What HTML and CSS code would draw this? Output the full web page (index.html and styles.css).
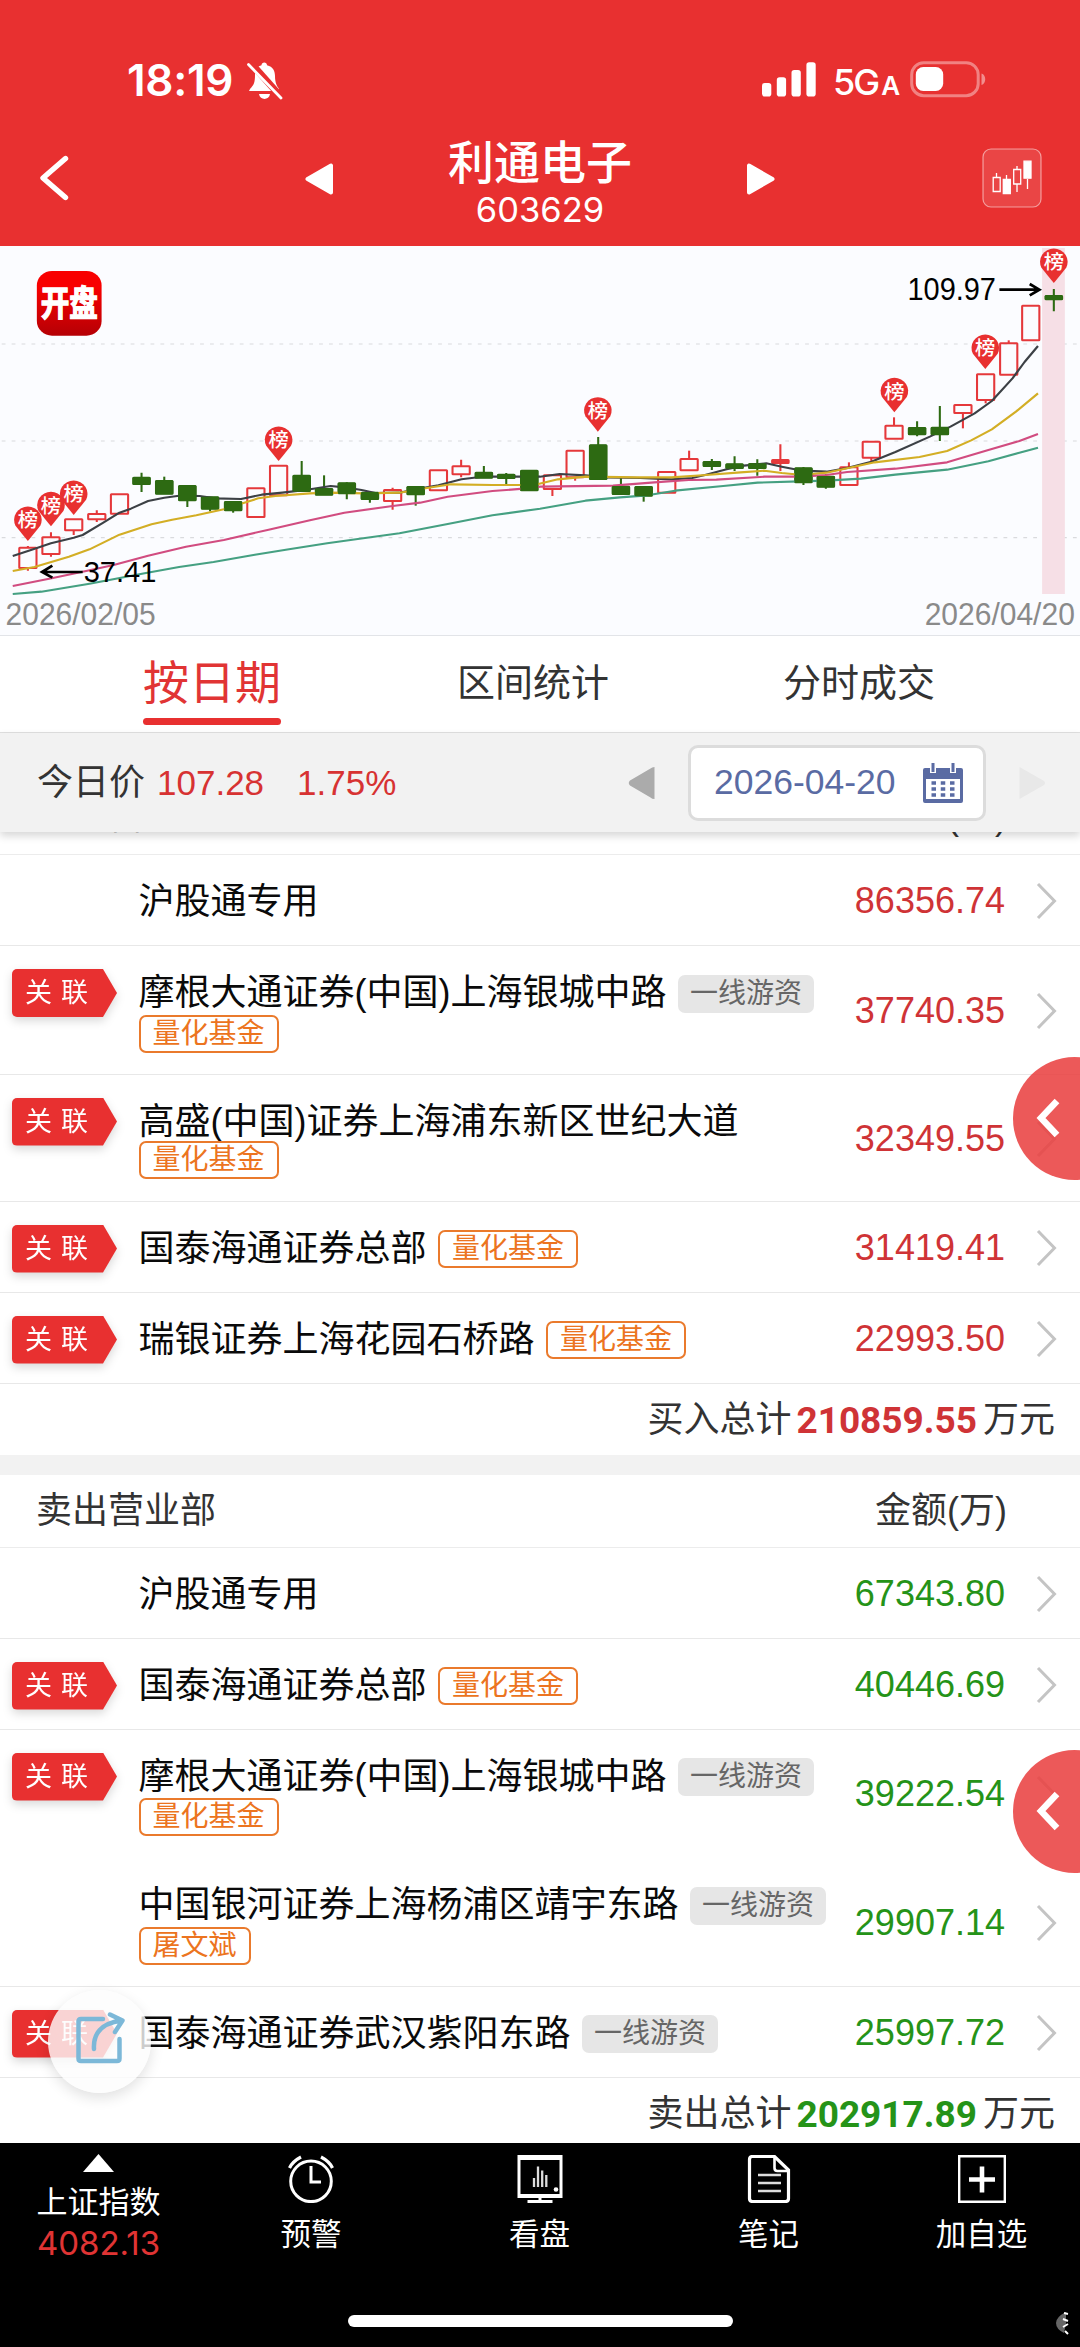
FILE: index.html
```html
<!DOCTYPE html>
<html lang="zh-CN">
<head>
<meta charset="utf-8">
<title>利通电子 603629</title>
<link rel="stylesheet" href="styles.css">
</head>
<body>
<svg class="defs" width="0" height="0">
  <symbol id="chev" viewBox="0 0 21 38"><path d="M2 2L18.500 19L2 36" fill="none" stroke="#c4c4c4" stroke-width="3"/></symbol>
</svg>
<div class="app">
  <header class="top">
    <div class="status">
      <span class="clock">18:19</span>
      <svg class="bell" width="38" height="40" viewBox="0 0 38 40"><path fill="#fff" d="M4 28c4-4 5-7 5-14C9 8 12 5 15.500 4.200 15.500 0.500 21 0.500 21 4.200 27 5.500 29 10 29 15c0 7 2 10 4 13v2H3z"/><path fill="#fff" d="M13 33h11c-1 6.500-10 6.500-11 0z"/><path d="M4 1L36 37" stroke="#e83030" stroke-width="7"/><path d="M2.500 3.500L35 37" stroke="#fff" stroke-width="2.800" stroke-linecap="round"/></svg>
      <svg class="signal" width="54" height="35" viewBox="0 0 54 35" fill="#fff"><rect y="21" width="9.300" height="13.500" rx="2.800"/><rect x="14.800" y="15.200" width="9.300" height="19.300" rx="2.800"/><rect x="29.500" y="8" width="9.300" height="26.500" rx="2.800"/><rect x="44.400" y="0.300" width="9.300" height="34.200" rx="2.800"/></svg>
      <span class="net">5G<small>A</small></span>
      <svg class="battery" width="77" height="37" viewBox="0 0 77 37"><rect x="1.700" y="1.700" width="66.500" height="33" rx="12" fill="none" stroke="#fff" stroke-opacity=".4" stroke-width="3"/><rect x="5.800" y="6" width="27.400" height="24" rx="7.500" fill="#fff"/><path d="M71.500 12.500c5 1.500 5 10 0 11.500z" fill="#fff" fill-opacity=".45"/></svg>
    </div>
    <div class="nav">
      <svg class="back" width="34" height="48" viewBox="0 0 34 48"><path d="M28.500 4.500L6 24l22.500 19.500" fill="none" stroke="#fff" stroke-width="5.400" stroke-linecap="round" stroke-linejoin="round"/></svg>
      <svg class="prev" width="28" height="32" viewBox="0 0 28 32"><path d="M26 2.500v27L2.500 16z" fill="#fff" stroke="#fff" stroke-width="4" stroke-linejoin="round"/></svg>
      <div class="title"><h1>利通电子</h1><p>603629</p></div>
      <svg class="next" width="28" height="32" viewBox="0 0 28 32"><path d="M2 2.500v27L25.500 16z" fill="#fff" stroke="#fff" stroke-width="4" stroke-linejoin="round"/></svg>
      <svg class="kbtn" width="60" height="60" viewBox="0 0 60 60"><rect x="1" y="1" width="58" height="58" rx="8" fill="#fff" fill-opacity=".1" stroke="#fff" stroke-opacity=".5" stroke-width="1.200"/><g stroke="#fff" stroke-width="1.300"><path d="M14.500 25v4M24.500 27v4M35 18v4M35 36v8M45.500 31v10" /><path d="M11.200 29.500h7v14h-7zM31.700 21.500h7v14.500h-7z" fill="none"/><path d="M21.300 31.500h7v14h-7zM42 13.200h7v17h-7z" fill="#fff"/></g></svg>
    </div>
  </header>

  <section class="chart"><svg id="kline" width="1080" height="389" viewBox="0 18 3136 1167" preserveAspectRatio="none"></svg></section>

  <nav class="tabs"><a class="tab on">按日期</a><a class="tab">区间统计</a><a class="tab">分时成交</a></nav>

  <div class="pricebar">
    <span class="today">今日价</span><span class="px">107.28</span><span class="px pct">1.75%</span>
    <svg class="dprev" width="27" height="34" viewBox="0 0 27 34"><path d="M26.500 1v32Q24 33 22.500 31.500L2 19.500Q-.5 17 2 14.500L22.500 2.500Q24 1 26.500 1z" fill="#ababab"/></svg>
    <div class="date"><span>2026-04-20</span>
      <svg width="42" height="40" viewBox="0 0 42 40"><path fill="#5a6ba3" d="M3 5h5v5h6V5h14v5h6V5h5q2 0 2 2v31q0 2-2 2H3q-2 0-2-2V7q0-2 2-2z"/><path fill="#5a6ba3" d="M9.500 0h3v9h-3zM29.500 0h3v9h-3z"/><path fill="#fff" d="M4 16h34v20H4z"/><path stroke="#5a6ba3" stroke-width="3.600" stroke-dasharray="4.500 4.750" d="M9.500 20h24M9.500 26h24M9.500 32h24"/></svg>
    </div>
    <svg class="dnext" width="27" height="34" viewBox="0 0 27 34"><path d="M.5 1v32L25 19q2-2 0-4z" fill="#e8e8e8"/></svg>
  </div>

  <main class="list">
    <div class="thead first"><span>买入营业部</span><span>金额(万)</span></div>
    <div class="row"><i></i><div class="name"><p>沪股通专用</p></div><b class="amt">86356.74</b><svg class="chev"><use href="#chev"/></svg></div>
    <div class="row tall"><em class="link"><span>关联</span></em><div class="name"><p>摩根大通证券(中国)上海银城中路<span class="tag gray">一线游资</span></p><p><span class="tag">量化基金</span></p></div><b class="amt">37740.35</b><svg class="chev"><use href="#chev"/></svg></div>
    <div class="row tall tight"><em class="link"><span>关联</span></em><div class="name"><p>高盛(中国)证券上海浦东新区世纪大道</p><p><span class="tag">量化基金</span></p></div><b class="amt">32349.55</b><svg class="chev"><use href="#chev"/></svg></div>
    <div class="row"><em class="link"><span>关联</span></em><div class="name"><p>国泰海通证券总部<span class="tag">量化基金</span></p></div><b class="amt">31419.41</b><svg class="chev"><use href="#chev"/></svg></div>
    <div class="row"><em class="link"><span>关联</span></em><div class="name"><p>瑞银证券上海花园石桥路<span class="tag">量化基金</span></p></div><b class="amt">22993.50</b><svg class="chev"><use href="#chev"/></svg></div>
    <div class="total">买入总计<strong>210859.55</strong>万元</div>
    <div class="gap"></div>
    <div class="sell">
      <div class="thead"><span>卖出营业部</span><span>金额(万)</span></div>
      <div class="row"><i></i><div class="name"><p>沪股通专用</p></div><b class="amt">67343.80</b><svg class="chev"><use href="#chev"/></svg></div>
      <div class="row"><em class="link"><span>关联</span></em><div class="name"><p>国泰海通证券总部<span class="tag">量化基金</span></p></div><b class="amt">40446.69</b><svg class="chev"><use href="#chev"/></svg></div>
      <div class="row tall plain"><em class="link"><span>关联</span></em><div class="name"><p>摩根大通证券(中国)上海银城中路<span class="tag gray">一线游资</span></p><p><span class="tag">量化基金</span></p></div><b class="amt">39222.54</b><svg class="chev"><use href="#chev"/></svg></div>
      <div class="row tall"><i></i><div class="name"><p>中国银河证券上海杨浦区靖宇东路<span class="tag gray">一线游资</span></p><p><span class="tag">屠文斌</span></p></div><b class="amt">29907.14</b><svg class="chev"><use href="#chev"/></svg></div>
      <div class="row"><em class="link"><span>关联</span></em><div class="name"><p>国泰海通证券武汉紫阳东路<span class="tag gray">一线游资</span></p></div><b class="amt">25997.72</b><svg class="chev"><use href="#chev"/></svg></div>
      <div class="total">卖出总计<strong>202917.89</strong>万元</div>
    </div>
  </main>

  <footer class="dock">
    <div class="items">
      <div class="item index"><svg width="31" height="18" viewBox="0 0 31 18"><path d="M15.500 0L31 18H0z" fill="#fff"/></svg><span>上证指数</span><b>4082.13</b></div>
      <div class="item"><svg width="48" height="48" viewBox="0 0 48 48" fill="none" stroke="#fff"><circle cx="24" cy="26.300" r="20.300" stroke-width="3"/><path d="M24 11v16h10" stroke-width="3"/><path d="M2.500 13q3-6.500 11.500-11M45.500 13q-3-6.500-11.500-11" stroke-width="3.200"/></svg><span>预警</span></div>
      <div class="item"><svg width="48" height="48" viewBox="0 0 48 48"><path fill="#fff" fill-rule="evenodd" d="M1.500 0h45v43h-45zM4.500 5v34h39V5z"/><path d="M24 42v4M11.500 46.500h25" stroke="#fff" stroke-width="3"/><path d="M18 32v-9M22 32V11.500M26.200 32V15.500M30.300 32V20" stroke="#ddd" stroke-width="2.300"/><circle cx="40" cy="34.500" r="2.300" fill="#fff"/></svg><span>看盘</span></div>
      <div class="item"><svg width="48" height="48" viewBox="0 0 48 48" fill="none" stroke="#fff"><path d="M7.500 1.500h22L43.500 15v28.500q0 3-3 3h-33q-3 0-3-3v-39q0-3 3-3z" stroke-width="3.200"/><path d="M29.500 2v11q0 3 3 3h11" stroke-width="2.600"/><path d="M13 20h23M13 28h23M13 36h23" stroke="#ddd" stroke-width="2.500"/></svg><span>笔记</span></div>
      <div class="item"><svg width="48" height="48" viewBox="0 0 48 48" fill="none" stroke="#fff"><path d="M1.200 1.200h45.600v45.600H1.200z" stroke-width="2.400"/><path d="M24 11.500v26M11 24.500h26" stroke-width="4.600"/></svg><span>加自选</span></div>
    </div>
    <div class="home"></div>
    <svg class="mark" width="16" height="24" viewBox="0 0 16 24"><path d="M12 1Q2 6 2 12t8 10l2-10z" fill="#666"/><path d="M10 2l4 1M9 8l5 2M9 16l5-3M11 20l3 3" stroke="#fff" stroke-width="2"/></svg>
  </footer>

  <div class="drawer d1"><svg width="26" height="40" viewBox="0 0 26 40"><path d="M21 3L5 20l16 17" fill="none" stroke="#fff" stroke-width="6.500"/></svg></div>
  <div class="drawer d2"><svg width="26" height="40" viewBox="0 0 26 40"><path d="M21 3L5 20l16 17" fill="none" stroke="#fff" stroke-width="6.500"/></svg></div>
  <div class="share"><svg width="50" height="52" viewBox="0 0 50 52" fill="none" stroke="#7cb8d8" stroke-width="4.500" stroke-linecap="round" stroke-linejoin="round"><path d="M28 7H6q-2.500 0-2.500 2.500v37Q3.500 49 6 49h36q2.500 0 2.500-2.500V27"/><path d="M19 37C18 22 26 11 47 8.500M35 2.500L47.500 8.500 40 20"/></svg></div>
</div>
<script src="script.js"></script>
</body>
</html>
```
FILE: styles.css
```css
* { box-sizing: border-box; }
body, h1, p { margin: 0; }
body { background: #fff; font-family: "Liberation Sans", "Noto Sans CJK SC", sans-serif; }
.defs { position: absolute; }
.app { position: relative; width: 1080px; height: 2347px; overflow: hidden; display: flex; flex-direction: column; }

.top { height: 246px; background: #e83030; color: #fff; flex: none; }
.status { display: flex; height: 118px; padding: 61px 0 0 127px; align-items: flex-start; font-family: Inter, sans-serif; font-weight: 600; }
.clock { width: 119px; font-size: 44px; line-height: 38px; letter-spacing: -.3px; }
.bell { margin-right: 478px; }
.signal { margin-top: 1px; }
.net { width: 94px; padding-left: 17px; font-size: 36px; line-height: 42px; font-weight: 500; letter-spacing: -2px; white-space: nowrap; }
.net small { font-size: 26px; font-weight: 600; margin-left: 3px; }
.nav { display: flex; align-items: flex-start; height: 128px; padding-left: 37px; }
.back { margin: 36px 234px 0 0; }
.prev { margin-top: 45px; }
.title { width: 414px; text-align: center; }
.title h1 { margin-top: 19px; font-size: 46px; line-height: 52px; font-weight: 500; }
.title p { font: 400 34.500px/40px Inter, sans-serif; margin-top: 1px; }
.next { margin: 45px 207px 0 0; }
.kbtn { margin-top: 30px; }

.chart { height: 390px; background: #fbfcff; border-bottom: 1px solid #e2e4e8; flex: none; }
.chart svg { display: block; }

.tabs { display: flex; height: 97px; border-bottom: 1px solid #e0e0e0; flex: none; padding-left: 143px; }
.tab { flex: none; white-space: nowrap; font-size: 38px; line-height: 95px; color: #333; }
.tab + .tab { margin-left: 174px; }
.tab.on { font-size: 46px; color: #e13434; }
.tab.on + .tab { margin-left: 176px; }
.tab.on::after { content: ""; display: block; height: 7px; margin-top: -13px; border-radius: 4px; background: #e83030; }

.pricebar { position: relative; z-index: 1; display: flex; align-items: center; height: 99px; flex: none; padding-left: 37px; background: #f2f2f2; box-shadow: 0 4px 8px rgba(0,0,0,.16); font-size: 35px; }
.today { font-size: 36px; line-height: 40px; color: #333; }
.px { width: 140px; margin-left: 12px; color: #d73232; }
.pct { margin-left: 0; width: 190px; }
.dprev { margin: 0 33px 0 auto; }
.date { display: flex; align-items: center; width: 298px; height: 76px; padding: 0 19px 0 23px; justify-content: space-between; border: 3px solid #dcdcdc; border-radius: 10px; background: #fff; color: #5a6ba3; font-size: 35.500px; }
.dnext { margin: 0 34px 0 33px; }

.list { height: 1311px; overflow: hidden; flex: none; }
.thead { display: flex; justify-content: space-between; align-items: center; height: 72.5px; padding: 0 73px 8px 36px; font-size: 36px; color: #333; border-bottom: 1.500px solid #ececec; }
.thead.first { margin-top: -49.500px; padding-bottom: 10px; }
.row { display: grid; grid-template-columns: 126.500px 1fr auto 21px; height: 91px; padding: 0 23px 0 12px; border-bottom: 1.500px solid #e8e8e8; }
.row.tall { height: 128.500px; }
.row.tight { height: 127px; }
.row.plain { border-color: transparent; }
.name { padding-top: 27px; font-size: 36px; line-height: 40px; color: #0a0a0a; white-space: nowrap; }
.name p { display: flex; align-items: center; height: 40px; gap: 11.500px; }
.tight .name p + p { margin-top: -2px; }
.tag { flex: none; height: 38px; padding: 0 12px; border: 2.500px solid #ea7a2c; border-radius: 7px; font-size: 28px; line-height: 33px; color: #ec7420; }
.name p > .tag { margin-top: 1px; }
.tag.gray { border: 0; background: #e6e6e6; color: #666; line-height: 38px; }
.amt { align-self: center; margin-right: 31px; padding-top: 2px; font-size: 36px; font-weight: 400; color: #cf3336; }
.sell .amt, .sell .total strong { color: #259318; }
.chev { align-self: center; width: 21px; height: 38px; margin-top: 2px; }
.link { width: 105px; height: 48px; margin-top: 23px; font-style: normal; filter: drop-shadow(0 4px 5px rgba(0,0,0,.15)); }
.link span { display: block; height: 48px; padding-left: 13px; border-radius: 5px 0 0 5px; background: #e83030; color: #fff; font-size: 27px; line-height: 48px; letter-spacing: 9px; clip-path: polygon(0 0, 91px 0, 105px 50%, 91px 100%, 0 100%); }
.total { display: flex; justify-content: flex-end; height: 71.500px; padding-right: 25px; font-size: 36px; line-height: 72px; color: #333; }
.total strong { margin: 0 6px 0 5px; font: 700 37px/74px Roboto, sans-serif; color: #cf3336; }
.gap { height: 20px; background: #f2f2f2; }

.dock { position: relative; height: 204px; flex: none; background: #000; color: #fff; }
.items { display: grid; grid-template-columns: 197px 228px 229px 229px 197px; height: 172px; }
.item { display: flex; flex-direction: column; align-items: center; padding-top: 12px; font-size: 30.500px; }
.item span { line-height: 40px; margin-top: 11px; }
.index { padding-top: 11px; font-size: 31px; }
.index b { font: 400 33px/40px Inter, sans-serif; color: #e03434; }
.home { width: 385px; height: 12px; margin: 0 auto; border-radius: 6px; background: #fff; }
.mark { position: absolute; left: 1054px; top: 168px; }

.drawer { position: absolute; z-index: 2; left: 1013px; width: 123px; height: 123px; border-radius: 50%; background: rgba(233,64,64,.87); padding: 41px 0 0 23px; }
.d1 { top: 1057px; }
.d2 { top: 1750px; }
.share { position: absolute; z-index: 2; left: 48px; top: 1990px; width: 103px; height: 103px; border-radius: 50%; background: rgba(252,252,252,.8); box-shadow: 0 5px 14px rgba(0,0,0,.12); padding: 22px 0 0 27px; }
```
FILE: script.js
```js
// x, body top, body bottom, high, low, kind (r hollow, f filled red, g green)
const candles = [
[81,923,984,918,992,'r'],[148,892,942,877,950,'r'],[214,838,871,838,885,'r'],[281,822,838,811,846,'r'],[347,763,821,763,821,'r'],
[411,713,732,698,756,'g'],[477,723,761,710,761,'g'],[544,738,781,738,801,'g'],[610,772,806,772,814,'g'],[677,786,811,786,818,'g'],
[743,745,831,745,831,'r'],[809,677,766,677,766,'r'],[876,707,753,663,753,'g'],[941,747,764,706,764,'g'],[1007,730,760,727,778,'g'],
[1074,758,777,755,788,'g'],[1140,750,783,743,809,'r'],[1207,741,763,741,797,'g'],[1273,691,751,691,751,'r'],[1339,679,703,659,712,'r'],
[1405,698,713,678,713,'g'],[1470,704,714,699,733,'g'],[1537,692,751,692,751,'g'],[1604,706,747,706,768,'r'],[1670,632,712,632,722,'r'],
[1737,616,717,591,717,'g'],[1803,740,762,709,762,'g'],[1869,741,767,741,785,'g'],[1936,696,758,696,758,'r'],[2001,657,691,632,691,'r'],
[2067,666,678,657,690,'g'],[2133,673,684,649,693,'g'],[2199,672,684,658,707,'g'],[2266,660,669,613,693,'f'],[2333,685,727,681,735,'g'],
[2398,710,740,703,746,'g'],[2465,682,735,667,735,'r'],[2530,605,653,605,663,'r'],[2596,557,596,532,596,'r'],[2663,564,583,544,589,'g'],
[2729,563,583,498,603,'g'],[2796,495,519,495,565,'r'],[2862,403,480,403,490,'r'],[2929,310,404,301,404,'r'],[2993,197,301,197,301,'r'],
[3060,168,178,147,214,'g']];
const averages = {
'#3c4045':'37,948 90,930 148,910 214,893 240,885 300,848 347,818 380,806 430,783 477,773 520,767 580,768 625,775 700,777 760,764 820,758 870,752 910,746 960,738 1000,742 1050,750 1090,759 1160,758 1210,747 1273,736 1340,718 1400,710 1470,710 1568,710 1625,702 1700,706 1760,712 1860,714 1950,718 2010,714 2050,704 2110,688 2160,677 2225,670 2270,680 2330,692 2400,695 2460,684 2530,665 2600,636 2700,590 2760,560 2830,520 2880,483 2940,415 2975,366 3014,318',
'#d3ae25':'37,993 100,981 200,950 260,928 347,884 440,853 500,839 570,826 650,808 700,791 750,775 800,768 900,760 960,758 1060,760 1160,758 1240,744 1310,733 1430,735 1510,735 1560,733 1620,718 1700,710 1850,712 1950,712 2050,705 2150,697 2220,692 2270,699 2330,705 2400,698 2460,685 2540,667 2670,651 2750,633 2820,601 2880,568 2950,515 3014,460',
'#d14c80':'37,1038 150,1015 250,993 330,975 430,947 540,920 650,900 780,869 900,841 1000,818 1140,798 1220,788 1300,770 1430,753 1520,746 1570,740 1780,737 1900,727 2000,720 2080,719 2220,710 2330,710 2400,705 2460,696 2600,686 2750,667 2870,630 2960,603 3014,582',
'#45a082':'37,1062 120,1055 260,1031 420,1000 520,981 620,966 740,944 830,929 950,910 1060,894 1160,880 1300,852 1430,826 1568,806 1700,782 1800,772 1880,766 1960,752 2100,738 2200,728 2320,724 2400,722 2500,716 2600,704 2750,689 2870,664 2960,638 3014,623'};
const pins = [[81,840],[148,796],[214,762],[809,600],[1736,512],[2597,454],[2861,324],[3060,66]];

let s = '';
for (const y of [312, 603, 893]) s += `<path d="M5 ${y}H3136" stroke="#d9dadd" stroke-width="3.500" stroke-dasharray="11 17.800"/>`;
s += '<rect x="3026" y="24" width="66" height="1038" fill="#f6dfe6"/>';
for (const [x, t, b, h, l, k] of candles) {
  const c = k === 'g' ? '#2d6a12' : '#e5383b';
  const fill = k === 'r' ? 'none' : c;
  const w = k === 'r' ? 50 : 48;
  s += `<path d="M${x} ${h}V${t}M${x} ${b}V${l}" stroke="${c}" stroke-width="6"/><rect x="${x - w / 2}" y="${t}" width="${w}" height="${b - t}" rx="1.500" fill="${fill}" stroke="${c}" stroke-width="6" stroke-linejoin="round"/>`;
}
for (const c in averages) s += `<polyline points="${averages[c]}" fill="none" stroke="${c}" stroke-width="6.300" stroke-linejoin="round"/>`;
for (const [x, t, b, h, l, k] of candles) if (k === 'g') s += `<rect x="${x - 26}" y="${t - 2}" width="52" height="${b - t + 4}" rx="3" fill="#2d6a12"/>`;
for (const [x, y] of pins) s += `<path d="M${x - 36} ${y + 17}A40 40 0 1 1 ${x + 36} ${y + 17}Q${x + 22} ${y + 35} ${x} ${y + 63}Q${x - 22} ${y + 35} ${x - 36} ${y + 17}z" fill="#e83030"/><text x="${x}" y="${y + 22}" font-size="59" font-weight="500" fill="#fff" text-anchor="middle">榜</text>`;
s += '<defs><linearGradient id="lg" x1="0" y1="0" x2="0" y2="1"><stop offset=".25" stop-color="#f80000"/><stop offset="1" stop-color="#b50005"/></linearGradient></defs>';
s += '<rect x="107" y="93" width="188" height="194" rx="44" fill="url(#lg)"/><g transform="translate(201 229) scale(1 1.280)"><text font-size="83" font-weight="700" fill="#fff" stroke="#fff" stroke-width="3" text-anchor="middle">开盘</text></g>';
s += '<path d="M240 996H122M152 977L122 996L152 1013M2902 149H3018M2990 132L3018 149L2990 166" fill="none" stroke="#000" stroke-width="8"/>';
const label = (x, y, w, size, t) => `<text x="${x}" y="${y}" font-size="${size}" textLength="${w}" lengthAdjust="spacingAndGlyphs">${t}</text>`;
s += label(243, 1026, 211, 90, '37.41') + label(2635, 179, 257, 92, '109.97');
s += '<g fill="#8a8a8a">' + label(16, 1154, 436, 93, '2026/02/05') + label(2685, 1154, 436, 93, '2026/04/20') + '</g>';
document.getElementById('kline').innerHTML = s;
```
